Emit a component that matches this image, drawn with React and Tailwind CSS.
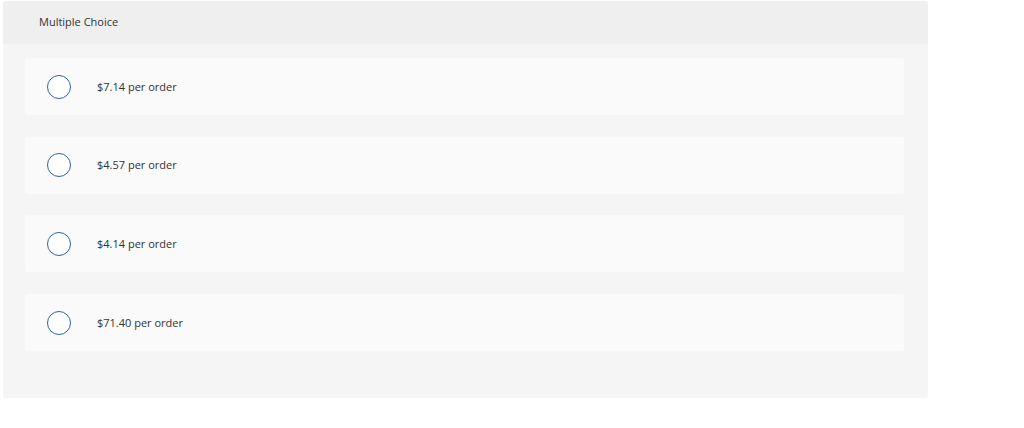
import React from 'react';

const options = ['$7.14 per order', '$4.57 per order', '$4.14 per order', '$71.40 per order'];

const Option = ({ label }) => (
  <label className="flex items-center h-[57px] rounded-[3px] bg-[#fafafa] pl-[22px] cursor-pointer">
    <span className="w-[24px] h-[24px] rounded-full border border-[#2e63a6] bg-white shrink-0" />
    <span className="ml-[26px] pt-[1px] text-[11px] text-[#333333]">{label}</span>
  </label>
);

export default function App() {
  return (
    <div className="bg-white w-[1024px] h-[428px] pt-[1px] pl-[3px]" style={{ fontFamily: '"Open Sans", Lato, sans-serif' }}>
      <div className="w-[925px] h-[397px] rounded-[3px] bg-[#f5f5f5] overflow-hidden">
        <div className="h-[43px] bg-[#efefef] flex items-center pl-[36px]">
          <span className="text-[11px] text-[#333333]">Multiple Choice</span>
        </div>
        <div className="flex flex-col gap-[21.7px] pt-[14px] pl-[22px] pr-[24px]">
          {options.map(o => (
            <Option key={o} label={o} />
          ))}
        </div>
      </div>
    </div>
  );
}
